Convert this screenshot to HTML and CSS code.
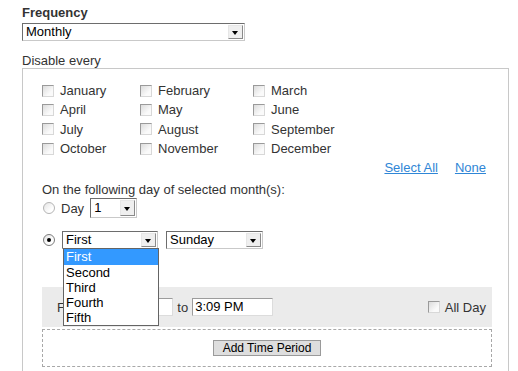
FILE: index.html
```html
<!DOCTYPE html>
<html>
<head>
<meta charset="utf-8">
<link rel="stylesheet" href="styles.css">
</head>
<body>
<div class="page">
  <div class="title">Frequency</div>
  <div class="select sel-freq"><span class="val">Monthly</span><span class="arrow"></span></div>
  <div class="label">Disable every</div>
  <div class="box">
    <div class="months">
      <label class="month"><span class="cb"></span>January</label>
      <label class="month"><span class="cb"></span>February</label>
      <label class="month"><span class="cb"></span>March</label>
      <label class="month"><span class="cb"></span>April</label>
      <label class="month"><span class="cb"></span>May</label>
      <label class="month"><span class="cb"></span>June</label>
      <label class="month"><span class="cb"></span>July</label>
      <label class="month"><span class="cb"></span>August</label>
      <label class="month"><span class="cb"></span>September</label>
      <label class="month"><span class="cb"></span>October</label>
      <label class="month"><span class="cb"></span>November</label>
      <label class="month"><span class="cb"></span>December</label>
    </div>
    <div class="links"><a href="#">Select All</a><a href="#" class="none">None</a></div>
    <div class="following">On the following day of selected month(s):</div>
    <div class="dayrow">
      <span class="radio"></span>
      <span class="daytxt">Day</span>
      <div class="select sel-day"><span class="val">1</span><span class="arrow"></span></div>
    </div>
    <div class="weekrow">
      <span class="radio checked"></span>
      <div class="select sel-nth">
        <span class="val">First</span><span class="arrow"></span>
        <ul class="dropdown">
          <li class="hl">First</li>
          <li>Second</li>
          <li>Third</li>
          <li>Fourth</li>
          <li>Fifth</li>
        </ul>
      </div>
      <div class="select sel-wd"><span class="val">Sunday</span><span class="arrow"></span></div>
    </div>
    <div class="timebox">
      <div class="timefields">
        <span class="from">From</span>
        <span class="input in-from"></span>
        <span class="to">to</span>
        <span class="input in-to">3:09 PM</span>
      </div>
      <label class="allday"><span class="cb"></span>All Day</label>
    </div>
    <div class="addbox">
      <button class="addbtn">Add Time Period</button>
    </div>
  </div>
</div>
</body>
</html>
```

FILE: styles.css
```css
* { box-sizing: border-box; }
html, body { margin: 0; padding: 0; background: #fff; }
body {
  font-family: "Liberation Sans", Arial, sans-serif;
  font-size: 13px;
  color: #333;
  overflow: hidden;
}
.page { padding: 5px 0 0 22px; }
.title { font-weight: bold; line-height: 16px; }

.select {
  position: relative;
  display: flex;
  align-items: stretch;
  height: 18px;
  border: 1px solid;
  border-color: #6d6d6d #c9c9c9 #c9c9c9 #6d6d6d;
  background: #fff;
  color: #000;
  line-height: 16px;
}
.select .val { flex: 1; padding-left: 3px; white-space: nowrap; }
.select .arrow {
  position: relative;
  width: 15px;
  margin: 1px 1px 1px 0;
  background: #efefef;
  border: 1px solid;
  border-color: #e6e6e6 #8a8a8a #8a8a8a #e6e6e6;
}
.select .arrow::after {
  content: "";
  position: absolute;
  left: 3px;
  top: 5px;
  border-left: 3.5px solid transparent;
  border-right: 3.5px solid transparent;
  border-top: 4px solid #000;
}
.sel-freq { width: 223px; margin-top: 2px; }
.label { margin-top: 13px; line-height: 14px; }

.box {
  width: 487px;
  border: 1px solid #c8c8c8;
  padding: 12px 22px 30px 19px;
}
.months {
  display: grid;
  grid-template-columns: 98px 113px 1fr;
  grid-auto-rows: 19.33px;
}
.month { display: flex; align-items: center; line-height: 19px; }

.cb {
  display: inline-block;
  width: 12px;
  height: 12px;
  margin-right: 6px;
  border: 1px solid;
  border-color: #9a9a9a #d8d8d8 #d8d8d8 #9a9a9a;
  background: linear-gradient(135deg, #dcdcdc, #fafafa 70%);
  flex: none;
}

.links { text-align: right; line-height: 19px; }
.links a { color: #2f86d6; text-decoration: underline; }
.links .none { margin-left: 17px; }

.following { margin-top: 5px; line-height: 16px; }

.radio {
  display: inline-block;
  width: 12px;
  height: 12px;
  border-radius: 50%;
  border: 1px solid #b4b4b4;
  background: linear-gradient(135deg, #e4e4e4, #fff 70%);
  position: relative;
  flex: none;
}
.radio.checked { border-color: #7c7c7c; }
.radio.checked::after {
  content: "";
  position: absolute;
  left: 3px;
  top: 3px;
  width: 4px;
  height: 4px;
  border-radius: 50%;
  background: #000;
}

.dayrow { display: flex; align-items: center; height: 20px; }
.dayrow .radio { margin-left: 1px; }
.daytxt { margin-left: 6px; margin-right: 6px; }
.sel-day { width: 47px; height: 20px; line-height: 18px; }
.sel-day .arrow::after { top: 6px; }

.weekrow { display: flex; align-items: center; margin-top: 13px; }
.weekrow .radio { margin-left: 1px; margin-right: 7px; }
.sel-nth { width: 96px; z-index: 5; }
.sel-wd { width: 97px; margin-left: 8px; }

.dropdown {
  position: absolute;
  top: 100%;
  left: 0;
  width: 96px;
  margin: 0;
  padding: 0;
  list-style: none;
  background: #fff;
  border: 1px solid #646464;
  color: #000;
  z-index: 10;
}
.dropdown li { line-height: 15.2px; height: 15.2px; padding-left: 2px; }
.dropdown li.hl { background: #3399ff; color: #fff; }

.timebox {
  width: 450px;
  height: 40px;
  margin-top: 38px;
  background: #ebebeb;
  display: flex;
  align-items: center;
  justify-content: space-between;
  padding: 0 6px 0 15px;
}
.timefields { display: flex; align-items: center; }
.from { margin-right: 3px; }
.input {
  display: inline-block;
  height: 18px;
  border: 1px solid;
  border-color: #9c9c9c #dcdcdc #dcdcdc #9c9c9c;
  background: #fff;
  color: #000;
  line-height: 16px;
  padding-left: 2px;
}
.in-from { width: 83px; }
.in-to { width: 81px; }
.to { margin: 0 4px 0 4px; }
.allday { display: flex; align-items: center; }
.allday .cb { margin-right: 5px; }

.addbox {
  width: 450px;
  margin-top: 2px;
  border: 1px dashed #a8a8a8;
  padding: 10px 0 10px;
  text-align: center;
}
.addbtn {
  font-family: "Liberation Sans", Arial, sans-serif;
  font-size: 12px;
  line-height: 14px;
  height: 16px;
  padding: 0 9px;
  margin: 0;
  color: #000;
  background: #dedede;
  border: 1px solid #9a9a9a;
  border-radius: 0;
  vertical-align: top;
}
```
